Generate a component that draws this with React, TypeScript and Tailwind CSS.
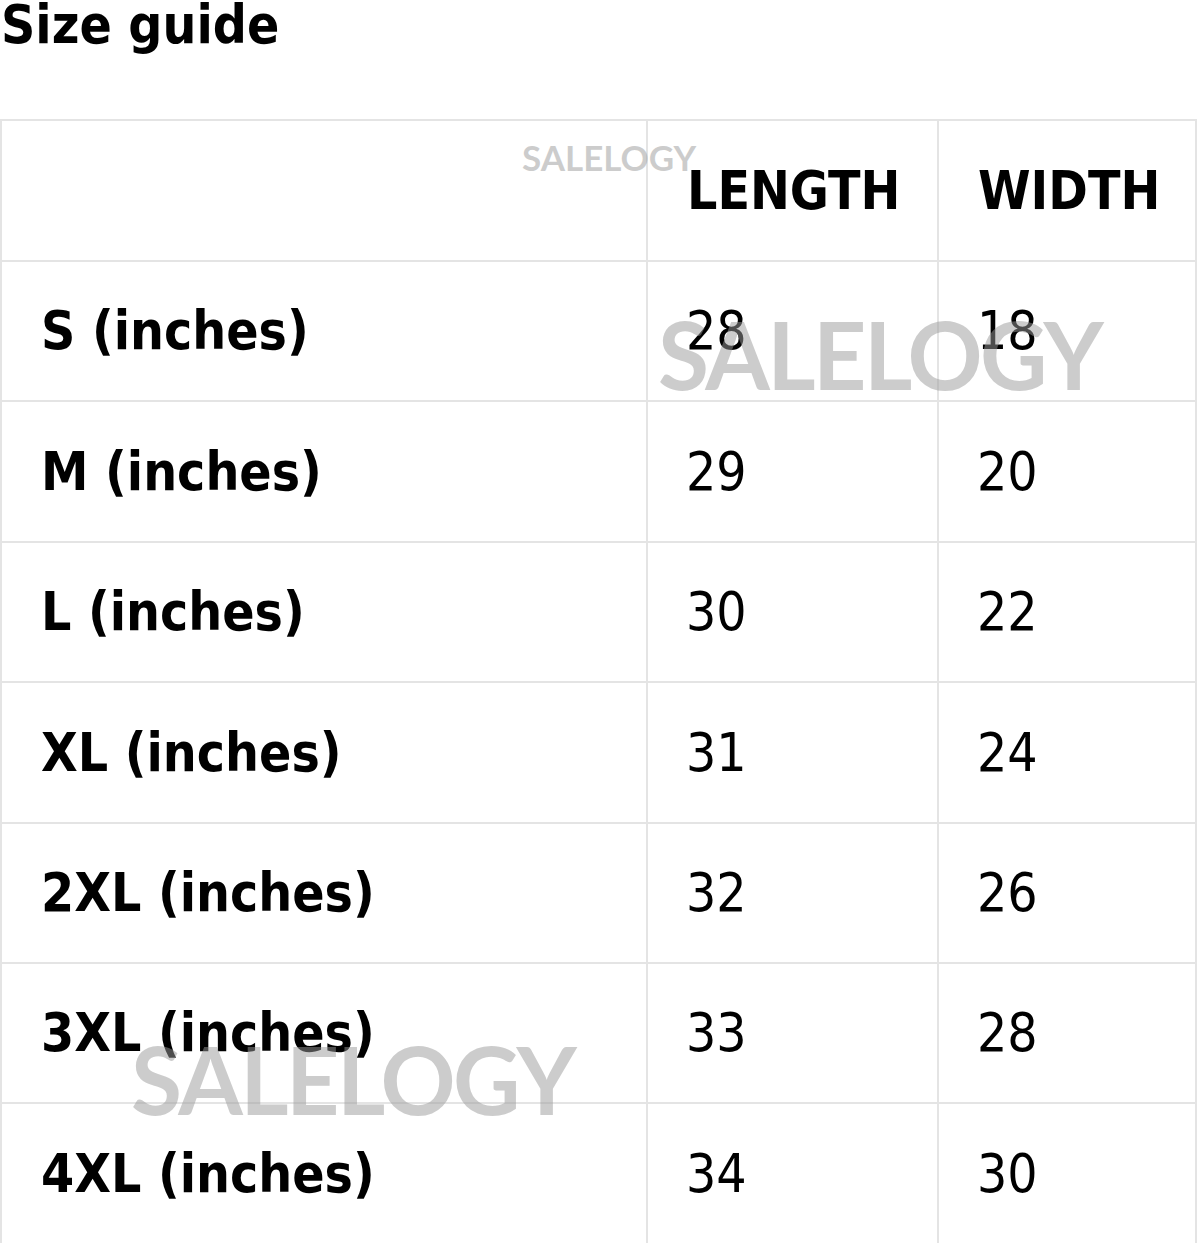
const rows = [
  { size: "S (inches)", length: "28", width: "18" },
  { size: "M (inches)", length: "29", width: "20" },
  { size: "L (inches)", length: "30", width: "22" },
  { size: "XL (inches)", length: "31", width: "24" },
  { size: "2XL (inches)", length: "32", width: "26" },
  { size: "3XL (inches)", length: "33", width: "28" },
  { size: "4XL (inches)", length: "34", width: "30" },
];

function Watermark({ className }: { className: string }) {
  return (
    <span
      className={
        "absolute pointer-events-none select-none font-['Lato',sans-serif] font-bold leading-none text-[#9a9a9a]/50 " +
        className
      }
    >
      SALELOGY
    </span>
  );
}

export default function App() {
  return (
    <div className="relative w-[1200px] h-[1245px] bg-white text-black font-['DejaVu_Sans_Condensed','DejaVu_Sans',sans-serif] [font-stretch:condensed]">
      <h1 className="-mt-[2px] pl-[1px] text-[53px] font-bold leading-none">Size guide</h1>

      <table className="mt-[68px] w-[1197px] border-collapse">
        <thead>
          <tr>
            <th className="h-[141px] w-[646px] border-2 border-[#e4e4e4]"></th>
            <th className="h-[141px] w-[291px] border-2 border-[#e4e4e4] pl-[39px] text-left text-[53px] font-bold">
              LENGTH
            </th>
            <th className="h-[141px] border-2 border-[#e4e4e4] pl-[39px] text-left text-[53px] font-bold">
              WIDTH
            </th>
          </tr>
        </thead>
        <tbody>
          {rows.map((r) => (
            <tr key={r.size}>
              <td className="h-[140.4px] border-2 border-[#e4e4e4] pl-[39px] text-[53px] font-bold">{r.size}</td>
              <td className="h-[140.4px] border-2 border-[#e4e4e4] pl-[38px] text-[53px]">{r.length}</td>
              <td className="h-[140.4px] border-2 border-[#e4e4e4] pl-[38px] text-[53px]">{r.width}</td>
            </tr>
          ))}
        </tbody>
      </table>

      <Watermark className="left-[522px] top-[142px] text-[35px]" />
      <Watermark className="left-[658px] top-[310px] text-[93px] tracking-[-2.5px]" />
      <Watermark className="left-[131px] top-[1035px] text-[93px] tracking-[-2.5px]" />
    </div>
  );
}
